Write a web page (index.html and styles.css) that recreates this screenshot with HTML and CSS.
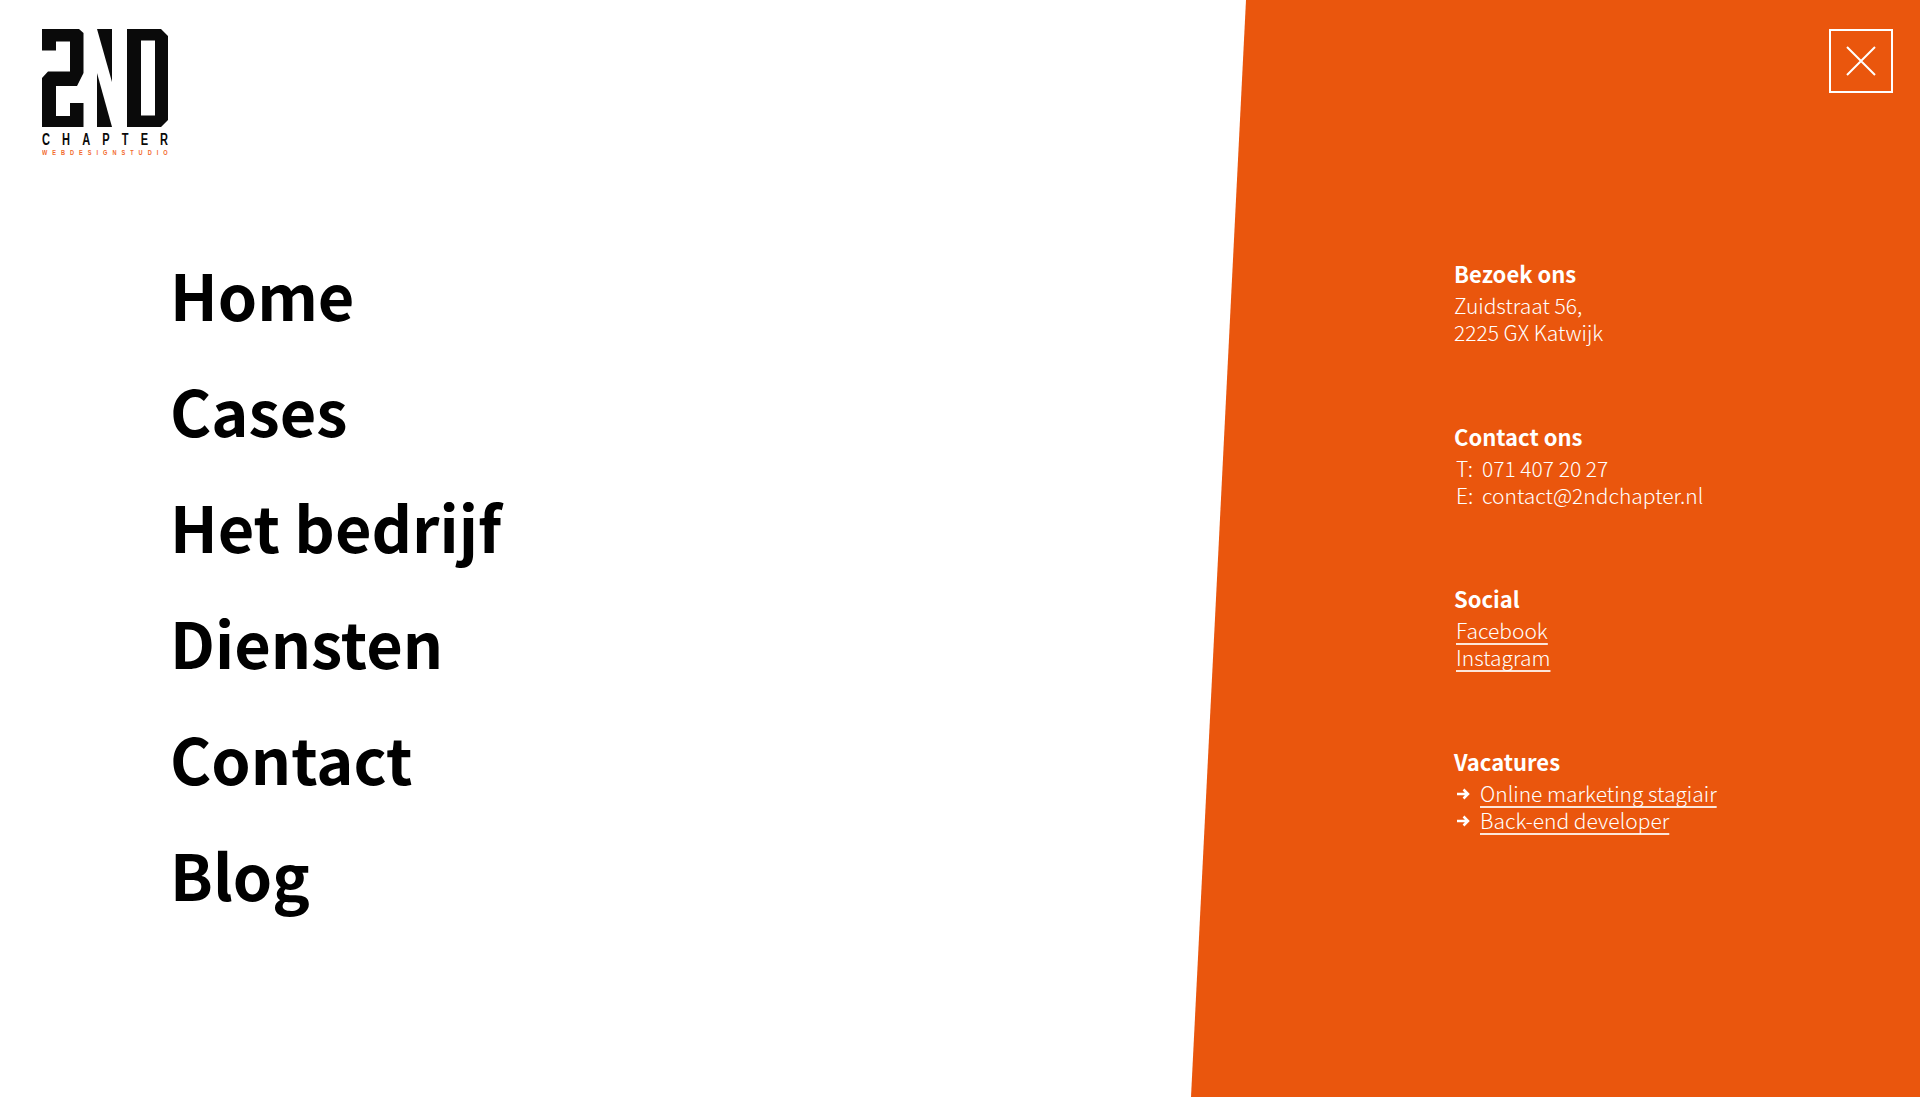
FILE: index.html
```html
<!DOCTYPE html>
<html lang="nl">
<head>
<meta charset="utf-8">
<title>2nd Chapter</title>
<link rel="stylesheet" href="styles.css">
</head>
<body>
<div class="page">
  <main class="left">
    <a class="logo" href="#" aria-label="2nd Chapter">
      <svg class="logo-svg" viewBox="42 29 127 130" width="127" height="130">
        <path class="ink" fill-rule="evenodd" d="M42 29H79L83.500 33V73L77 86H56V116H70V103H83.500V127H42V78L48 71.500H70V41.500H56V50.500H42Z"/>
        <path class="ink" d="M97 29H112V82Z"/>
        <path class="ink" d="M97 73L112 127H97Z"/>
        <path class="ink" fill-rule="evenodd" d="M127 29H161L168 36V120L161 127H127ZM141 40.500V115.500H155V40.500Z"/>
        <text class="logo-chapter" transform="translate(42 145) scale(0.65 1)" textLength="194">CHAPTER</text>
        <text class="logo-studio" transform="translate(42 155) scale(0.8 1)" textLength="157">WEBDESIGNSTUDIO</text>
      </svg>
    </a>
    <nav class="menu">
      <a href="#">Home</a>
      <a href="#">Cases</a>
      <a href="#">Het bedrijf</a>
      <a href="#">Diensten</a>
      <a href="#">Contact</a>
      <a href="#">Blog</a>
    </nav>
  </main>
  <aside class="panel">
    <div class="panel-top">
      <button class="close" aria-label="Sluiten">
        <svg viewBox="0 0 30 30" width="30" height="30"><path d="M1 1L29 29M29 1L1 29"/></svg>
      </button>
    </div>
    <section class="info">
      <h2>Bezoek ons</h2>
      <p>Zuidstraat 56,</p>
      <p>2225 GX Katwijk</p>
    </section>
    <section class="info">
      <h2>Contact ons</h2>
      <p class="inset"><span class="label">T:</span>071 407 20 27</p>
      <p class="inset"><span class="label">E:</span>contact@2ndchapter.nl</p>
    </section>
    <section class="info">
      <h2>Social</h2>
      <p class="inset"><a href="#">Facebook</a></p>
      <p class="inset"><a href="#">Instagram</a></p>
    </section>
    <section class="info">
      <h2>Vacatures</h2>
      <p class="job"><svg viewBox="0 0 14 12" width="14" height="12"><path d="M1 6H12M7.500 1.500L12 6L7.500 10.500"/></svg><a href="#">Online marketing stagiair</a></p>
      <p class="job"><svg viewBox="0 0 14 12" width="14" height="12"><path d="M1 6H12M7.500 1.500L12 6L7.500 10.500"/></svg><a href="#">Back-end developer</a></p>
    </section>
  </aside>
</div>
</body>
</html>
```
FILE: styles.css
```css
* { box-sizing: border-box; }
html, body { margin: 0; height: 100%; background: #fff; }
body { font-family: "Noto Sans CJK JP", "Open Sans", sans-serif; overflow: hidden; }
.page { display: flex; height: 1097px; }
.left { flex: 0 0 1191px; padding: 29px 0 0 42px; }
.logo { display: block; width: 127px; height: 130px; }
.logo-svg { display: block; }
.ink { fill: #0a0a0a; }
.logo-chapter { font: 700 17px "Liberation Sans", sans-serif; fill: #0a0a0a; }
.logo-studio { font: 700 7px "Liberation Sans", sans-serif; fill: #f2692c; }
.menu { display: flex; flex-direction: column; margin: 77px 0 0 128px; }
.menu a { font-size: 63px; font-weight: 700; line-height: 116px; color: #000; text-decoration: none; }
.panel {
  flex: 1;
  background: #ea560d;
  clip-path: polygon(55px 0, 100% 0, 100% 100%, 0 100%);
  color: #fff;
  padding: 29px 27px 0 263px;
  font-family: "Noto Sans CJK JP", sans-serif;
  font-weight: 300;
  font-size: 21px;
  line-height: 27px;
}
.panel-top { display: flex; justify-content: flex-end; margin-bottom: 167px; }
.close { width: 64px; height: 64px; padding: 0; border: 2px solid #fff; background: none; display: flex; align-items: center; justify-content: center; }
.close path { fill: none; stroke: #fff; stroke-width: 2; }
.info { margin-bottom: 76.500px; }
.info h2 { margin: 0 0 5px; font-size: 22px; line-height: 27px; font-weight: 700; }
.info p { margin: 0; }
.inset { padding-left: 2px; }
.label { display: inline-block; width: 26px; }
.info a {
  color: #fff;
  text-decoration: underline;
  text-decoration-thickness: 2px;
  text-decoration-color: rgba(255, 255, 255, .85);
  text-decoration-skip-ink: none;
  text-underline-offset: 4px;
}
.job { display: flex; align-items: center; gap: 10px; padding-left: 2px; }
.job svg { flex: none; margin-top: 2px; }
.job path { fill: none; stroke: #fff; stroke-width: 2.500; }
```
